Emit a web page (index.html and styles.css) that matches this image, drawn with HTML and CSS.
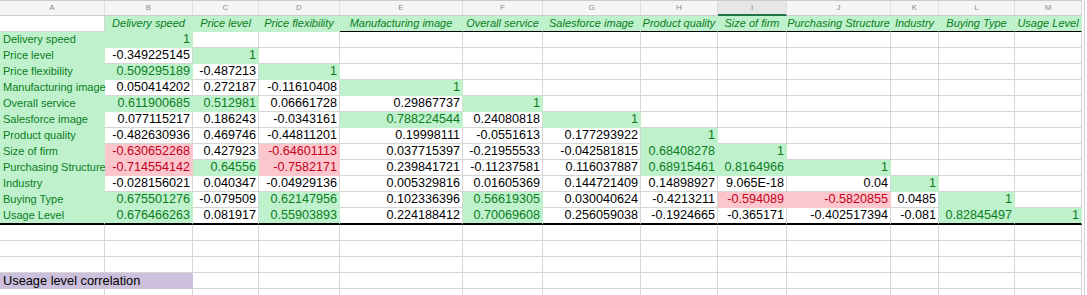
FILE: index.html
```html
<!DOCTYPE html>
<html>
<head>
<meta charset="utf-8">
<link rel="stylesheet" href="styles.css">
</head>
<body>
<div class="page">
<div class="sheet">
  <div class="c col">A</div><div class="c col">B</div><div class="c col">C</div><div class="c col">D</div><div class="c col">E</div><div class="c col">F</div><div class="c col">G</div><div class="c col">H</div><div class="c col sel">I</div><div class="c col">J</div><div class="c col">K</div><div class="c col">L</div><div class="c col">M</div>

  <div class="c"></div><div class="c hd g">Delivery speed</div><div class="c hd g">Price level</div><div class="c hd g">Price flexibility</div><div class="c hd g top">Manufacturing image</div><div class="c hd g top">Overall service</div><div class="c hd g top">Salesforce image</div><div class="c hd g top">Product quality</div><div class="c hd g top">Size of firm</div><div class="c hd g top">Purchasing Structure</div><div class="c hd g top">Industry</div><div class="c hd g top">Buying Type</div><div class="c hd g top">Usage Level</div>

  <div class="c lab g">Delivery speed</div><div class="c g">1</div><div class="c"></div><div class="c"></div><div class="c"></div><div class="c"></div><div class="c"></div><div class="c"></div><div class="c"></div><div class="c"></div><div class="c"></div><div class="c"></div><div class="c"></div>

  <div class="c lab g">Price level</div><div class="c">-0.349225145</div><div class="c g">1</div><div class="c"></div><div class="c"></div><div class="c"></div><div class="c"></div><div class="c"></div><div class="c"></div><div class="c"></div><div class="c"></div><div class="c"></div><div class="c"></div>

  <div class="c lab g">Price flexibility</div><div class="c g">0.509295189</div><div class="c">-0.487213</div><div class="c g">1</div><div class="c"></div><div class="c"></div><div class="c"></div><div class="c"></div><div class="c"></div><div class="c"></div><div class="c"></div><div class="c"></div><div class="c"></div>

  <div class="c lab g">Manufacturing image</div><div class="c">0.050414202</div><div class="c">0.272187</div><div class="c">-0.11610408</div><div class="c g">1</div><div class="c"></div><div class="c"></div><div class="c"></div><div class="c"></div><div class="c"></div><div class="c"></div><div class="c"></div><div class="c"></div>

  <div class="c lab g">Overall service</div><div class="c g">0.611900685</div><div class="c g">0.512981</div><div class="c">0.06661728</div><div class="c">0.29867737</div><div class="c g">1</div><div class="c"></div><div class="c"></div><div class="c"></div><div class="c"></div><div class="c"></div><div class="c"></div><div class="c"></div>

  <div class="c lab g">Salesforce image</div><div class="c">0.077115217</div><div class="c">0.186243</div><div class="c">-0.0343161</div><div class="c g">0.788224544</div><div class="c">0.24080818</div><div class="c g">1</div><div class="c"></div><div class="c"></div><div class="c"></div><div class="c"></div><div class="c"></div><div class="c"></div>

  <div class="c lab g">Product quality</div><div class="c">-0.482630936</div><div class="c">0.469746</div><div class="c">-0.44811201</div><div class="c">0.19998111</div><div class="c">-0.0551613</div><div class="c">0.177293922</div><div class="c g">1</div><div class="c"></div><div class="c"></div><div class="c"></div><div class="c"></div><div class="c"></div>

  <div class="c lab g">Size of firm</div><div class="c r">-0.630652268</div><div class="c">0.427923</div><div class="c r">-0.64601113</div><div class="c">0.037715397</div><div class="c">-0.21955533</div><div class="c">-0.042581815</div><div class="c g">0.68408278</div><div class="c g">1</div><div class="c"></div><div class="c"></div><div class="c"></div><div class="c"></div>

  <div class="c lab g">Purchasing Structure</div><div class="c r">-0.714554142</div><div class="c g">0.64556</div><div class="c r">-0.7582171</div><div class="c">0.239841721</div><div class="c">-0.11237581</div><div class="c">0.116037887</div><div class="c g">0.68915461</div><div class="c g">0.8164966</div><div class="c g">1</div><div class="c"></div><div class="c"></div><div class="c"></div>

  <div class="c lab g">Industry</div><div class="c">-0.028156021</div><div class="c">0.040347</div><div class="c">-0.04929136</div><div class="c">0.005329816</div><div class="c">0.01605369</div><div class="c">0.144721409</div><div class="c">0.14898927</div><div class="c">9.065E-18</div><div class="c">0.04</div><div class="c g">1</div><div class="c"></div><div class="c"></div>

  <div class="c lab g">Buying Type</div><div class="c g">0.675501276</div><div class="c">-0.079509</div><div class="c g">0.62147956</div><div class="c">0.102336396</div><div class="c g">0.56619305</div><div class="c">0.030040624</div><div class="c">-0.4213211</div><div class="c r">-0.594089</div><div class="c r">-0.5820855</div><div class="c">0.0485</div><div class="c g">1</div><div class="c"></div>

  <div class="c lab g last">Usage Level</div><div class="c g last">0.676466263</div><div class="c last">0.081917</div><div class="c g last">0.55903893</div><div class="c last">0.224188412</div><div class="c g last">0.70069608</div><div class="c last">0.256059038</div><div class="c last">-0.1924665</div><div class="c last">-0.365171</div><div class="c last">-0.402517394</div><div class="c last">-0.081</div><div class="c g last">0.82845497</div><div class="c g last">1</div>

  <div class="c"></div><div class="c"></div><div class="c"></div><div class="c"></div><div class="c"></div><div class="c"></div><div class="c"></div><div class="c"></div><div class="c"></div><div class="c"></div><div class="c"></div><div class="c"></div><div class="c"></div>

  <div class="c"></div><div class="c"></div><div class="c"></div><div class="c"></div><div class="c"></div><div class="c"></div><div class="c"></div><div class="c"></div><div class="c"></div><div class="c"></div><div class="c"></div><div class="c"></div><div class="c"></div>

  <div class="c"></div><div class="c"></div><div class="c"></div><div class="c"></div><div class="c"></div><div class="c"></div><div class="c"></div><div class="c"></div><div class="c"></div><div class="c"></div><div class="c"></div><div class="c"></div><div class="c"></div>

  <div class="c purple">Useage level correlation</div><div class="c"></div><div class="c"></div><div class="c"></div><div class="c"></div><div class="c"></div><div class="c"></div><div class="c"></div><div class="c"></div><div class="c"></div><div class="c"></div><div class="c"></div>

  <div class="c"></div><div class="c"></div><div class="c"></div><div class="c"></div><div class="c"></div><div class="c"></div><div class="c"></div><div class="c"></div><div class="c"></div><div class="c"></div><div class="c"></div><div class="c"></div><div class="c"></div>
</div>
<div class="edge"></div>
</div>
</body>
</html>
```

FILE: styles.css
```css
html, body {
  margin: 0;
  padding: 0;
  background: #ffffff;
  overflow: hidden;
}

body {
  font-family: "Liberation Sans", Arial, Helvetica, sans-serif;
}

.page {
  display: flex;
  height: 295px;
}

.sheet {
  display: grid;
  width: 1082px;
  grid-template-columns: 105px 88px 66px 81px 123px 80px 98px 77px 69px 104px 48px 76px 67px;
  grid-template-rows: repeat(13, 16px) 17px;
  grid-auto-rows: 16px;
}

.edge {
  width: 1px;
  margin-left: 2px;
  background: #cfcfcf;
  height: 295px;
}

.c {
  box-sizing: border-box;
  border-right: 1px solid #d6d6d6;
  border-bottom: 1px solid #d6d6d6;
  font-size: 12.6px;
  line-height: 15px;
  text-align: right;
  padding: 0 2px 0 2px;
  white-space: nowrap;
  overflow: hidden;
  color: #000000;
}

.col {
  background: #f5f5f5;
  border-top: 1px solid #cbcbcb;
  border-right-color: #dedede;
  border-bottom-color: #cdcdcd;
  font-size: 8px;
  line-height: 14px;
  color: #8c8c8c;
  text-align: center;
}

.col.sel {
  background: #e6e6e6;
  border-bottom: 2px solid #217346;
  line-height: 13px;
}

.lab {
  font-size: 11px;
  text-align: left;
  padding-left: 3px;
  padding-right: 0;
  overflow: visible;
}

.hd {
  font-size: 11px;
  font-style: italic;
  text-align: center;
  padding: 0;
}

.g {
  background: #bef1cc;
  color: #0b7d1c;
  border-color: #bef1cc;
}

.r {
  background: #fbc7cd;
  color: #c4001a;
  border-color: #fbc7cd;
}

.top {
  border-bottom-color: #000000;
}

.last {
  border-bottom: 2px solid #000000;
}

.purple {
  grid-column: span 2;
  background: #cdc0dc;
  border-color: #cdc0dc;
  color: #000000;
  text-align: left;
  font-size: 12.8px;
  padding-left: 3px;
}
```
